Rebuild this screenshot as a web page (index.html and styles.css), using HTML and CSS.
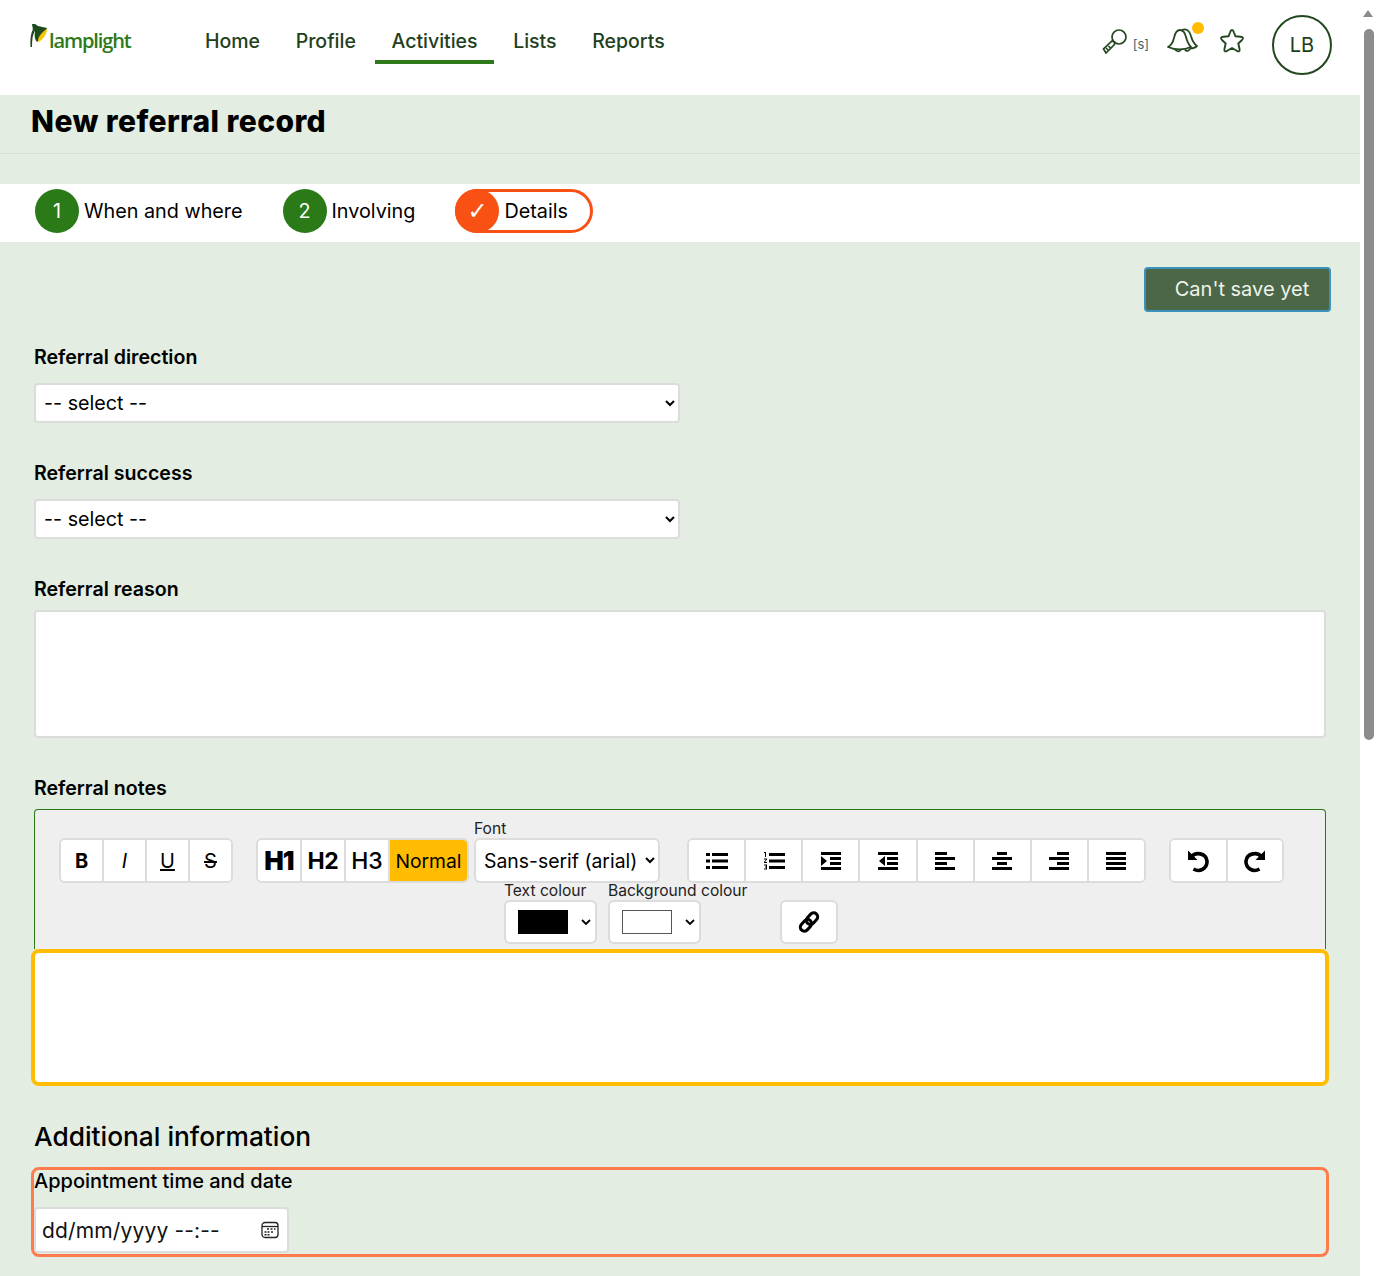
FILE: index.html
```html
<!DOCTYPE html>
<html lang="en">
<head>
  <meta charset="UTF-8">
  <meta name="viewport" content="width=device-width, initial-scale=1">
  <title>New referral record</title>
  <link rel="stylesheet" href="styles.css">
</head>
<body>
  <div class="page">
    <header class="topbar">
      <a class="logo" href="#">
        <svg width="18" height="24" viewBox="0 0 18 24">
          <path d="M3 5 C0.500 10 0 16 0.500 23 L2 23 C2 16 2.500 11 4.500 8 Z" fill="#1f4a1f"/>
          <path d="M2 0 L5 0 L8 2 L17 4 C14 10 10 16 7 18 C5 16 4 12 5 8 L3 6 Z" fill="#1f4a1f"/>
          <path d="M17 5 C17 10 12 17 8 18 C7 15 11 8 17 5 Z" fill="#f5c400"/>
        </svg>
        <span class="logo-text">lamplight</span>
      </a>
      <nav class="mainnav">
        <a href="#">Home</a>
        <a href="#">Profile</a>
        <a href="#" class="active">Activities</a>
        <a href="#">Lists</a>
        <a href="#">Reports</a>
      </nav>
      <div class="tools">
        <svg class="ic-search" width="26" height="26" viewBox="0 0 26 26" fill="none" stroke="#23471f" stroke-width="1.700">
          <circle cx="17" cy="9" r="7"/>
          <path d="M12.500 14 L10 13 L1.500 21 L4 25 L12.500 16.500 Z"/>
          <path d="M4 20 L6 22 M6.500 18 L8.500 20"/>
        </svg>
        <span class="shortcut">[s]</span>
        <span class="bell">
          <svg width="32" height="26" viewBox="0 0 32 26" fill="none" stroke="#23471f" stroke-width="1.800" stroke-linejoin="round">
            <path d="M1 20 C5 18 6 15 7 11 C8 6 10 3 13 3 C16 3 18 6 19 10 C20 14 21 17 24 20 C17 23 8 23 1 20 Z"/>
            <path d="M15 3 C19 1 23 4 24 9 C25 13 26 16 30 19 C28 21 26 21.500 23 21.500"/>
            <path d="M8 22 C9 25 13 25 14 22.500 M18 22.500 C19 24.500 22 24.500 23 21.500"/>
          </svg>
          <i class="dot"></i>
        </span>
        <svg class="ic-star" width="26" height="26" viewBox="0 0 26 26" fill="none" stroke="#23471f" stroke-width="1.900" stroke-linejoin="round">
          <path d="M13 2 C14 2 14.500 3 15 4.500 L16.500 8.300 L21.500 8.800 C24 9 24.800 10 23 12 L19.300 15.500 L20.500 20.800 C21 23.500 20 24 17.800 22.800 L13 20 L8.200 22.800 C6 24 5 23.500 5.500 20.800 L6.700 15.500 L3 12 C1.200 10 2 9 4.500 8.800 L9.500 8.300 L11 4.500 C11.500 3 12 2 13 2 Z"/>
        </svg>
        <span class="avatar">LB</span>
      </div>
    </header>

    <div class="titleband">
      <h1>New referral record</h1>
    </div>

    <div class="steps">
      <div class="step"><span class="num">1</span>When and where</div>
      <div class="step"><span class="num">2</span>Involving</div>
      <div class="step current"><span class="num check">✓</span>Details</div>
    </div>

    <main class="content">
      <div class="actions">
        <button class="savebtn" type="button">Can't save yet</button>
      </div>

      <label class="fieldlabel first">Referral direction</label>
      <select class="sel"><option>-- select --</option></select>

      <label class="fieldlabel">Referral success</label>
      <select class="sel"><option>-- select --</option></select>

      <label class="fieldlabel tight">Referral reason</label>
      <textarea class="reason"></textarea>

      <label class="fieldlabel notes">Referral notes</label>
      <div class="editor">
        <div class="toolbar">
          <div class="row1">
            <div class="btngroup g-format">
              <button type="button"><b>B</b></button>
              <button type="button"><i>I</i></button>
              <button type="button"><u>U</u></button>
              <button type="button"><s>S</s></button>
            </div>
            <div class="btngroup g-head">
              <button type="button" class="h1">H1</button>
              <button type="button" class="h2">H2</button>
              <button type="button" class="h3">H3</button>
              <button type="button" class="on">Normal</button>
            </div>
            <div class="fontpick">
              <span class="smalllabel">Font</span>
              <select class="toolsel"><option>Sans-serif (arial)</option></select>
            </div>
            <div class="btngroup g-icons">
              <button type="button"><svg width="22" height="18" viewBox="0 0 22 18"><path d="M0 1h4v3H0zM0 7.500h4v3H0zM0 14h4v3H0zM6 1h16v3H6zM6 7.500h16v3H6zM6 14h16v3H6z"/></svg></button>
              <button type="button"><svg width="22" height="18" viewBox="0 0 22 18"><path d="M1 0h2v5H2V1H1zM1 6.500h3v1L2 10h2v1H1v-1l2-2.500H1zM1 12.500h3v5H1v-1h2v-1H2v-1h1v-1H1zM6 1h16v3H6zM6 7.500h16v3H6zM6 14h16v3H6z"/></svg></button>
              <button type="button"><svg width="20" height="18" viewBox="0 0 20 18"><path d="M0 0h20v3H0zM9 5h11v3H9zM9 10h11v3H9zM0 15h20v3H0zM0 4l6 5-6 5z"/></svg></button>
              <button type="button"><svg width="20" height="18" viewBox="0 0 20 18"><path d="M0 0h20v3H0zM9 5h11v3H9zM9 10h11v3H9zM0 15h20v3H0zM7 4L1 9l6 5z"/></svg></button>
              <button type="button"><svg width="20" height="18" viewBox="0 0 20 18"><path d="M0 0h12v3H0zM0 5h20v3H0zM0 10h12v3H0zM0 15h20v3H0z"/></svg></button>
              <button type="button"><svg width="20" height="18" viewBox="0 0 20 18"><path d="M5 0h10v3H5zM0 5h20v3H0zM5 10h10v3H5zM0 15h20v3H0z"/></svg></button>
              <button type="button"><svg width="20" height="18" viewBox="0 0 20 18"><path d="M8 0h12v3H8zM0 5h20v3H0zM8 10h12v3H8zM0 15h20v3H0z"/></svg></button>
              <button type="button"><svg width="20" height="18" viewBox="0 0 20 18"><path d="M0 0h20v3H0zM0 5h20v3H0zM0 10h20v3H0zM0 15h20v3H0z"/></svg></button>
            </div>
            <div class="btngroup g-undo">
              <button type="button"><svg width="24" height="24" viewBox="0 0 24 24" fill="none" stroke="#000" stroke-width="3.600"><path d="M6 7.500 C9 3 20 3.500 21 12 C21.500 19 14 24 7.500 20"/><path d="M2 1.500 L2 11 L11.500 11 Z" fill="#000" stroke="none"/></svg></button>
              <button type="button"><svg width="24" height="24" viewBox="0 0 24 24" fill="none" stroke="#000" stroke-width="3.600"><path d="M18 7.500 C15 3 4 3.500 3 12 C2.500 19 10 24 16.500 20"/><path d="M22 1.500 L22 11 L12.500 11 Z" fill="#000" stroke="none"/></svg></button>
            </div>
          </div>
          <div class="row2">
            <div class="colourpick">
              <span class="smalllabel">Text colour</span>
              <div class="swatchsel"><span class="swatch black"></span><svg class="chev" width="10" height="6" viewBox="0 0 10 6"><path d="M1 1l4 4 4-4" fill="none" stroke="#000" stroke-width="1.800"/></svg></div>
            </div>
            <div class="colourpick">
              <span class="smalllabel">Background colour</span>
              <div class="swatchsel"><span class="swatch white"></span><svg class="chev" width="10" height="6" viewBox="0 0 10 6"><path d="M1 1l4 4 4-4" fill="none" stroke="#000" stroke-width="1.800"/></svg></div>
            </div>
            <button type="button" class="linkbtn">
              <svg width="24" height="24" viewBox="0 0 24 24" fill="none" stroke="#000" stroke-width="3"><g transform="rotate(-48 12 12)"><rect x="1" y="8" width="13" height="8" rx="4"/><rect x="10" y="8" width="13" height="8" rx="4"/></g></svg>
            </button>
          </div>
        </div>
        <div class="editarea"></div>
      </div>

      <h2 class="sectionhead">Additional information</h2>
      <div class="required">
        <label class="fieldlabel inside">Appointment time and date</label>
        <div class="dateinput">
          <span>dd/mm/yyyy --:--</span>
          <svg width="18" height="18" viewBox="0 0 18 18" fill="none" stroke="#222" stroke-width="1.300">
            <rect x="1" y="1.500" width="16" height="15" rx="3"/>
            <path d="M1 5.500h16"/>
            <path d="M6 8h2M9.500 8h2M13 8h1.500M3.500 11h2M6.500 11h2M10 11h2M3.500 13.800h2M6.500 13.800h2" stroke-width="1.500"/>
          </svg>
        </div>
      </div>
    </main>
  </div>

  <!-- drawn scrollbar -->
  <div class="scrollbar">
    <span class="arrow"></span>
    <span class="thumb"></span>
  </div>
</body>
</html>
```

FILE: styles.css
```css
html, body {
  margin: 0;
  height: 1276px;
  overflow: hidden;
}
body {
  display: flex;
  font-family: Inter, "Noto Sans", sans-serif;
  color: #000;
  background: #fff;
}
* {
  box-sizing: border-box;
}
.page {
  width: 1360px;
  flex: none;
  background: #e3ede2;
  height: 1276px;
}

/* header */
.topbar {
  height: 95px;
  background: #fff;
  display: flex;
  align-items: flex-start;
  padding-left: 30px;
}
.logo {
  display: flex;
  align-items: flex-start;
  width: 160px;
  margin-top: 24px;
  text-decoration: none;
}
.logo-text {
  font-family: "Open Sans", sans-serif;
  font-size: 20px;
  font-weight: 600;
  letter-spacing: -1.1px;
  color: #2e7a1a;
  margin: 3px 0 0 1px;
}
.mainnav {
  display: flex;
  gap: 3.6px;
  margin-left: -1px;
  margin-top: 21px;
}
.mainnav a {
  display: block;
  height: 43px;
  padding: 8px 16px 0;
  font-size: 19.5px;
  font-weight: 500;
  color: #1f4020;
  text-decoration: none;
}
.mainnav a.active {
  border-bottom: 4px solid #2e7a1a;
}
.tools {
  display: flex;
  align-items: flex-start;
  margin-left: auto;
  margin-right: 28px;
  margin-top: 15px;
}
.ic-search {
  margin-top: 13px;
}
.shortcut {
  font-size: 13px;
  color: #3d6a72;
  margin: 21px 0 0 5px;
}
.bell {
  position: relative;
  margin: 12px 0 0 18px;
  display: block;
  height: 26px;
}
.dot {
  position: absolute;
  top: -5px;
  left: 25px;
  width: 12px;
  height: 12px;
  border-radius: 50%;
  background: #ffbc00;
}
.ic-star {
  margin: 13px 0 0 20px;
}
.avatar {
  width: 60px;
  height: 60px;
  margin-left: 27px;
  border: 2px solid #23471f;
  border-radius: 50%;
  display: flex;
  align-items: center;
  justify-content: center;
  font-size: 20px;
  color: #1f4020;
}

/* title */
.titleband {
  height: 89px;
  padding-top: 58px;
  position: relative;
}
.titleband::before {
  content: "";
  display: block;
  height: 1px;
  background: #d8dfd7;
}
.titleband h1 {
  position: absolute;
  top: 7px;
  left: 31px;
  margin: 0;
  font-size: 30px;
  line-height: 38px;
  font-weight: 800;
  letter-spacing: 0.42px;
}

/* steps */
.steps {
  height: 58px;
  background: #fff;
  display: flex;
  align-items: flex-start;
  padding: 5px 0 0 35px;
  gap: 40px;
  font-size: 19.8px;
}
.step {
  display: flex;
  align-items: center;
  height: 44px;
}
.num {
  width: 44px;
  height: 44px;
  border-radius: 50%;
  background: #2a7a17;
  color: #fff;
  display: flex;
  align-items: center;
  justify-content: center;
  margin-right: 5px;
}
.step.current {
  border: 3px solid #f95114;
  border-radius: 22px;
  padding-right: 22px;
}
.step.current .num {
  background: #f95114;
  margin: -3px 5px -3px -3px;
}
.num.check {
  font-family: "DejaVu Sans", sans-serif;
  font-size: 24px;
  font-weight: 700;
}

/* form */
.content {
  padding: 25px 34px 0;
}
.actions {
  display: flex;
  justify-content: flex-end;
  margin-right: -5px;
}
.savebtn {
  width: 187px;
  height: 45px;
  background: #4b6748;
  border: 2px solid #3b93bd;
  border-radius: 4px;
  color: #eef3ea;
  font: 20px Inter, sans-serif;
  padding: 0 0 2px 9px;
}
.fieldlabel {
  display: block;
  font-size: 19.6px;
  line-height: 24px;
  font-weight: 600;
  margin: 38px 0 14px;
}
.fieldlabel.first {
  margin-top: 33px;
}
.fieldlabel.tight {
  margin-bottom: 9px;
}
.fieldlabel.notes {
  margin-top: 38px;
  margin-bottom: 9px;
}
.sel {
  display: block;
  width: 646px;
  height: 40px;
  background: #fff;
  border: 2px solid #dcdcdc;
  border-radius: 4px;
  font: 19.7px Inter, sans-serif;
  padding: 0 4px;
}
.reason {
  display: block;
  width: 1292px;
  height: 128px;
  background: #fff;
  border: 2px solid #dcdcdc;
  border-radius: 4px;
  resize: none;
}

/* editor */
.editor {
  width: 1292px;
}
.toolbar {
  height: 140px;
  background: #efefef;
  border: 1px solid #2a7a17;
  border-bottom: 0;
  border-radius: 4px 4px 0 0;
  padding-left: 24px;
}
.row1 {
  display: flex;
  align-items: flex-end;
  height: 73px;
}
.btngroup {
  display: flex;
  height: 45px;
  background: #fff;
  border: 2px solid #dcdcdc;
  border-radius: 6px;
  overflow: hidden;
}
.btngroup button {
  height: 100%;
  border: 0;
  border-left: 2px solid #dcdcdc;
  background: #fff;
  padding: 0;
  font: 20px Inter, sans-serif;
  color: #000;
  display: flex;
  align-items: center;
  justify-content: center;
}
.btngroup button:first-child {
  border-left: 0;
}
.g-format {
  width: 174px;
}
.g-format button {
  flex: 1;
}
.g-head {
  width: 213px;
  margin-left: 23px;
}
.g-head button {
  width: 44px;
  font-size: 23px;
}
.g-head .h1 {
  width: 42px;
  font-size: 26px;
  font-weight: 900;
  letter-spacing: -1px;
}
.g-head .h2 {
  font-weight: 700;
  letter-spacing: -0.3px;
}
.g-head .h3 {
  font-weight: 500;
}
.g-head .on {
  flex: 1;
  background: #ffbc00;
  font-size: 19.3px;
}
.fontpick {
  display: flex;
  flex-direction: column;
  margin-left: 5px;
}
.smalllabel {
  font-size: 15.6px;
  line-height: 19px;
  color: #222;
}
.toolsel {
  width: 186px;
  height: 45px;
  background: #fff;
  border: 2px solid #dcdcdc;
  border-radius: 6px;
  font: 19.4px Inter, sans-serif;
  padding: 0 4px;
}
.g-icons {
  width: 459px;
  margin-left: 27px;
}
.g-icons button {
  flex: 1;
}
.g-undo {
  width: 115px;
  margin-left: 23px;
}
.g-undo button {
  flex: 1;
}
.row2 {
  display: flex;
  align-items: flex-end;
  gap: 11px;
  padding-left: 445px;
  height: 61px;
}
.colourpick {
  display: flex;
  flex-direction: column;
  align-items: flex-start;
}
.colourpick .smalllabel {
  white-space: nowrap;
}
.swatchsel {
  width: 93px;
  height: 44px;
  background: #fff;
  border: 2px solid #dcdcdc;
  border-radius: 6px;
  display: flex;
  align-items: center;
  padding-left: 12px;
}
.swatch {
  width: 50px;
  height: 24px;
  border: 1px solid #555;
}
.swatch.black {
  background: #000;
  border-color: #000;
}
.swatch.white {
  background: #fff;
}
.chev {
  margin-left: 13px;
}
.colourpick:nth-child(2) {
  width: 93px;
}
.linkbtn {
  width: 58px;
  height: 44px;
  margin-left: 68px;
  background: #fff;
  border: 2px solid #dcdcdc;
  border-radius: 6px;
  padding: 0;
  display: flex;
  align-items: center;
  justify-content: center;
}
.editarea {
  height: 137px;
  margin: 0 -3px;
  background: #fff;
  border: 4px solid #ffbc00;
  border-radius: 8px;
}

/* additional info */
.sectionhead {
  margin: 34px 0 13px;
  font-size: 26.3px;
  line-height: 34px;
  font-weight: 500;
}
.required {
  height: 90px;
  margin: 0 -3px;
  width: 1298px;
  border: 3px solid #ff7a4d;
  border-radius: 8px;
}
.fieldlabel.inside {
  margin: -1px 0 14px;
  font-size: 20px;
  font-weight: 500;
}
.dateinput {
  display: flex;
  align-items: center;
  justify-content: space-between;
  width: 255px;
  height: 46px;
  background: #fff;
  border: 2px solid #dcdcdc;
  border-radius: 4px;
  font-size: 21px;
  letter-spacing: 0.15px;
  padding: 0 8px 0 6px;
  color: #111;
}

/* scrollbar on the right of the window */
.scrollbar {
  width: 17px;
  flex: none;
  background: #fff;
  position: relative;
}
.arrow {
  position: absolute;
  top: 10px;
  left: 3px;
  border: 5px solid transparent;
  border-top: 0;
  border-bottom: 7px solid #8c8c8c;
}
.thumb {
  position: absolute;
  top: 29px;
  left: 4px;
  width: 10px;
  height: 711px;
  background: #8c8c8c;
  border-radius: 5px;
}
```
